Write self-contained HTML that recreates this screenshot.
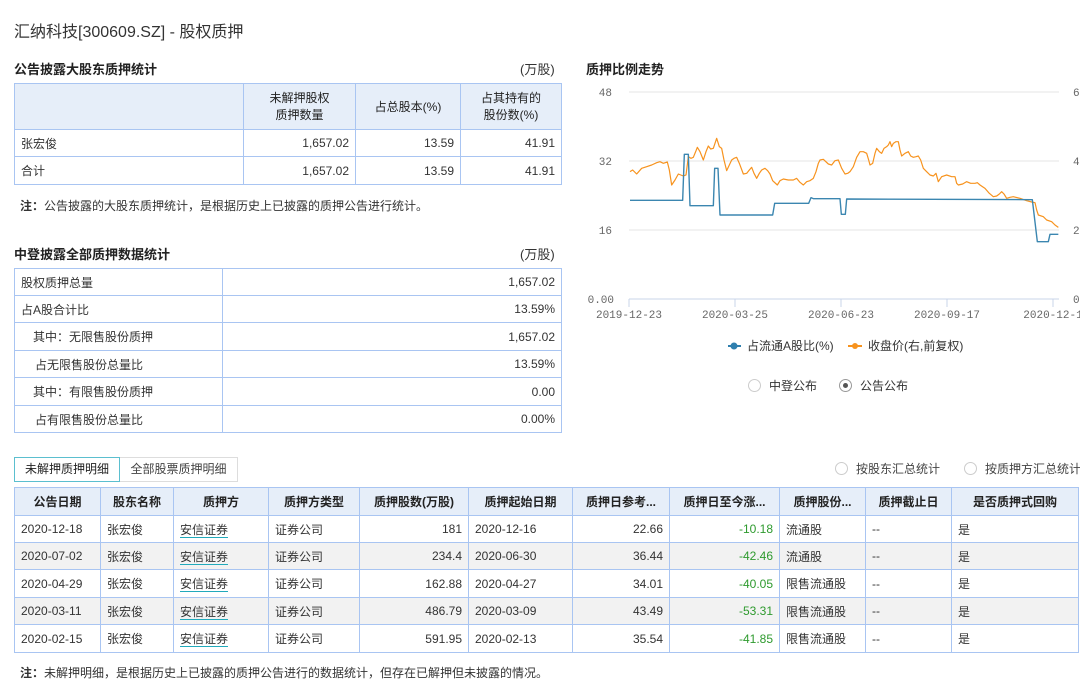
<!DOCTYPE html>
<html><head><meta charset="utf-8">
<style>
*{margin:0;padding:0;box-sizing:border-box}
body{width:1080px;height:688px;overflow:hidden;background:#fff;font-family:"Liberation Sans","Noto Sans CJK SC",sans-serif;color:#333;font-size:12px;position:relative}
.a{position:absolute;white-space:nowrap}
table{border-collapse:collapse;position:absolute;table-layout:fixed}
td,th{border:1px solid #a9c5f2;padding:0 6px;white-space:nowrap;overflow:hidden;font-weight:normal}
th{background:#e6eef9;color:#222}
.r{text-align:right}
.h{font-weight:bold;font-size:13px;color:#222}
.g{color:#2e9a2e}
.lk{border-bottom:1px solid #22aabb}
.rad{display:inline-block;width:13px;height:13px;border:1px solid #ccc;border-radius:50%;vertical-align:-2px;margin-right:8px;position:relative}
.rad.on::after{content:"";position:absolute;left:3px;top:3px;width:5px;height:5px;border-radius:50%;background:#555}
.rad.on{border-color:#999}
</style></head><body>
<div class="a" style="left:14px;top:18px;font-size:16px;color:#333">汇纳科技[300609.SZ] - 股权质押</div>

<div class="a h" style="left:14px;top:59px">公告披露大股东质押统计</div>
<div class="a" style="left:520px;top:59px;font-size:13px">(万股)</div>
<table style="left:14px;top:83px;width:547px">
<colgroup><col style="width:229px"><col style="width:112px"><col style="width:105px"><col style="width:101px"></colgroup>
<tr style="height:46px"><th></th><th style="line-height:17px">未解押股权<br>质押数量</th><th>占总股本(%)</th><th style="line-height:17px">占其持有的<br>股份数(%)</th></tr>
<tr style="height:27px"><td>张宏俊</td><td class="r">1,657.02</td><td class="r">13.59</td><td class="r">41.91</td></tr>
<tr style="height:28px"><td>合计</td><td class="r">1,657.02</td><td class="r">13.59</td><td class="r">41.91</td></tr>
</table>
<div class="a" style="left:20px;top:197px;font-size:12px"><b>注：</b>公告披露的大股东质押统计，是根据历史上已披露的质押公告进行统计。</div>

<div class="a h" style="left:14px;top:244px">中登披露全部质押数据统计</div>
<div class="a" style="left:520px;top:244px;font-size:13px">(万股)</div>
<table style="left:14px;top:268px;width:547px">
<colgroup><col style="width:208px"><col style="width:339px"></colgroup>
<tr style="height:27px"><td>股权质押总量</td><td class="r">1,657.02</td></tr>
<tr style="height:27px"><td>占A股合计比</td><td class="r">13.59%</td></tr>
<tr style="height:28px"><td style="padding-left:18px">其中：无限售股份质押</td><td class="r">1,657.02</td></tr>
<tr style="height:27px"><td style="padding-left:20px">占无限售股份总量比</td><td class="r">13.59%</td></tr>
<tr style="height:28px"><td style="padding-left:18px">其中：有限售股份质押</td><td class="r">0.00</td></tr>
<tr style="height:27px"><td style="padding-left:20px">占有限售股份总量比</td><td class="r">0.00%</td></tr>
</table>

<div class="a h" style="left:586px;top:59px">质押比例走势</div>
<svg class="a" style="left:0;top:0" width="1080" height="420">
<g stroke="#e6e6e6" stroke-width="1"><line x1="629" y1="92" x2="1059" y2="92"/><line x1="629" y1="161" x2="1059" y2="161"/><line x1="629" y1="230" x2="1059" y2="230"/></g>
<line x1="629" y1="299" x2="1059" y2="299" stroke="#c8d4ea"/>
<g stroke="#c8d4ea"><line x1="629" y1="299" x2="629" y2="307"/><line x1="735" y1="299" x2="735" y2="307"/><line x1="841" y1="299" x2="841" y2="307"/><line x1="947" y1="299" x2="947" y2="307"/><line x1="1053" y1="299" x2="1053" y2="307"/></g>
<g font-family="Liberation Mono,monospace" font-size="11" fill="#666">
<text x="612" y="96" text-anchor="end">48</text><text x="612" y="165" text-anchor="end">32</text><text x="612" y="234" text-anchor="end">16</text><text x="614" y="303" text-anchor="end">0.00</text>
<text x="1073" y="96">6</text><text x="1073" y="165">4</text><text x="1073" y="234">2</text><text x="1073" y="303">0</text>
<text x="629" y="318" text-anchor="middle">2019-12-23</text><text x="735" y="318" text-anchor="middle">2020-03-25</text><text x="841" y="318" text-anchor="middle">2020-06-23</text><text x="947" y="318" text-anchor="middle">2020-09-17</text><text x="1053" y="318" text-anchor="middle">2020-12-1</text>
</g>
<g transform="translate(580,50) scale(0.33333)" fill="none" stroke-linejoin="round">
<polyline vector-effect="non-scaling-stroke" stroke="#f7931e" stroke-width="1.2" points="150,365 158,360 170,372 185,355 200,350 215,345 230,338 240,335 250,340 262,336 268,360 275,405 285,390 295,372 310,378 318,375 325,320 333,325 340,322 347,305 352,292 360,305 370,330 378,305 385,288 392,297 400,295 405,280 410,265 418,290 425,295 432,330 440,362 448,345 455,330 462,325 470,322 478,340 490,372 500,370 508,360 515,352 522,370 530,385 538,370 545,360 555,355 563,362 570,372 578,392 592,405 600,392 610,387 625,390 640,390 650,385 660,397 670,405 680,395 690,392 700,385 708,365 715,340 720,330 730,328 745,342 755,345 765,332 775,330 785,355 795,372 803,370 810,365 820,350 830,322 840,305 850,305 860,310 866,330 870,345 878,340 885,310 890,295 898,305 905,310 912,295 920,290 925,285 930,275 935,290 940,280 948,275 955,275 960,300 965,318 975,310 985,305 992,318 1000,322 1008,320 1015,318 1022,330 1030,355 1040,365 1050,375 1060,378 1068,370 1075,395 1085,380 1100,375 1115,380 1125,380 1130,400 1135,405 1148,402 1160,395 1172,400 1185,400 1192,398 1200,405 1215,415 1228,430 1240,440 1250,438 1258,432 1265,425 1272,432 1280,445 1290,442 1300,440 1320,445 1340,452 1355,456 1365,458 1370,480 1375,495 1390,500 1400,510 1415,515 1425,525 1435,532"/>
<polyline vector-effect="non-scaling-stroke" stroke="#3b86b0" stroke-width="1.4" points="150,451 308,451 313,313 325,313 330,467 400,467 404,355 414,355 420,495 578,495 584,460 686,460 693,443 700,446 780,446 784,493 796,493 800,447 1357,449 1372,575 1405,575 1410,553 1435,553"/>
</g>
<g font-size="12" fill="#333" font-family="Liberation Sans,Noto Sans CJK SC,sans-serif">
<line x1="728" y1="346" x2="741" y2="346" stroke="#2f7fae" stroke-width="2"/><circle cx="734" cy="346" r="3.5" fill="#2f7fae"/>
<text x="747" y="350">占流通A股比(%)</text>
<line x1="848" y1="346" x2="862" y2="346" stroke="#f7931e" stroke-width="2"/><circle cx="855" cy="346" r="3" fill="#f7931e"/>
<text x="868" y="350">收盘价(右,前复权)</text>
</g>
</svg>
<div class="a" style="left:748px;top:377px;font-size:12px"><span class="rad"></span>中登公布</div>
<div class="a" style="left:839px;top:377px;font-size:12px"><span class="rad on"></span>公告公布</div>

<div class="a" style="left:14px;top:457px;width:106px;height:25px;border:1px solid #5bbfcf;line-height:23px;text-align:center;font-size:12px;color:#222">未解押质押明细</div>
<div class="a" style="left:120px;top:457px;width:118px;height:25px;border:1px solid #ddd;border-left:none;line-height:23px;text-align:center;font-size:12px;color:#444">全部股票质押明细</div>
<div class="a" style="left:835px;top:460px;font-size:12px;color:#444"><span class="rad"></span>按股东汇总统计</div>
<div class="a" style="left:964px;top:460px;font-size:12px;color:#444"><span class="rad"></span>按质押方汇总统计</div>

<table style="left:14px;top:487px;width:1064px">
<colgroup><col style="width:86px"><col style="width:73px"><col style="width:95px"><col style="width:91px"><col style="width:109px"><col style="width:104px"><col style="width:97px"><col style="width:110px"><col style="width:86px"><col style="width:86px"><col style="width:127px"></colgroup>
<tr style="height:28px;font-weight:bold"><th style="font-weight:bold">公告日期</th><th style="font-weight:bold">股东名称</th><th style="font-weight:bold">质押方</th><th style="font-weight:bold">质押方类型</th><th style="font-weight:bold">质押股数(万股)</th><th style="font-weight:bold">质押起始日期</th><th style="font-weight:bold">质押日参考...</th><th style="font-weight:bold">质押日至今涨...</th><th style="font-weight:bold">质押股份...</th><th style="font-weight:bold">质押截止日</th><th style="font-weight:bold">是否质押式回购</th></tr>
<tr style="height:27px"><td>2020-12-18</td><td>张宏俊</td><td><span class="lk">安信证券</span></td><td>证券公司</td><td class="r">181</td><td>2020-12-16</td><td class="r">22.66</td><td class="r g">-10.18</td><td>流通股</td><td>--</td><td>是</td></tr>
<tr style="height:27px;background:#f2f2f2"><td>2020-07-02</td><td>张宏俊</td><td><span class="lk">安信证券</span></td><td>证券公司</td><td class="r">234.4</td><td>2020-06-30</td><td class="r">36.44</td><td class="r g">-42.46</td><td>流通股</td><td>--</td><td>是</td></tr>
<tr style="height:28px"><td>2020-04-29</td><td>张宏俊</td><td><span class="lk">安信证券</span></td><td>证券公司</td><td class="r">162.88</td><td>2020-04-27</td><td class="r">34.01</td><td class="r g">-40.05</td><td>限售流通股</td><td>--</td><td>是</td></tr>
<tr style="height:27px;background:#f2f2f2"><td>2020-03-11</td><td>张宏俊</td><td><span class="lk">安信证券</span></td><td>证券公司</td><td class="r">486.79</td><td>2020-03-09</td><td class="r">43.49</td><td class="r g">-53.31</td><td>限售流通股</td><td>--</td><td>是</td></tr>
<tr style="height:28px"><td>2020-02-15</td><td>张宏俊</td><td><span class="lk">安信证券</span></td><td>证券公司</td><td class="r">591.95</td><td>2020-02-13</td><td class="r">35.54</td><td class="r g">-41.85</td><td>限售流通股</td><td>--</td><td>是</td></tr>
</table>
<div class="a" style="left:20px;top:664px;font-size:12px"><b>注：</b>未解押明细，是根据历史上已披露的质押公告进行的数据统计，但存在已解押但未披露的情况。</div>
</body></html>
